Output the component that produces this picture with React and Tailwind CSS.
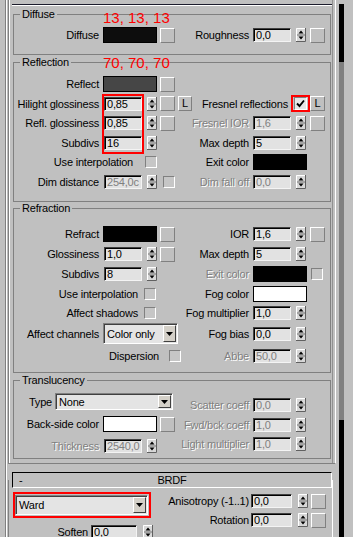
import React from "react";

const DIS = "text-[#808080] [text-shadow:1px_1px_0_#ffffff]";

function Lbl({ w = "w-[85px]", dis, children }) {
  return (
    <span className={`${w} shrink-0 text-right whitespace-nowrap ${dis ? DIS : ""}`}>
      {children}
    </span>
  );
}

function Field({ v, w = "w-[38px]", dis, cls = "" }) {
  return (
    <div
      className={`${w} ${cls} h-[14px] shrink-0 overflow-hidden whitespace-nowrap bg-[#e2e2e2] border border-t-[#404040] border-l-[#404040] border-r-[#f4f4f4] border-b-[#f4f4f4] shadow-[inset_1px_1px_0_#000000] pl-[2px] leading-[12px] ${
        dis ? "text-[#808080]" : "text-black"
      }`}
    >
      {v}
    </div>
  );
}

function Spin({ cls = "" }) {
  return (
    <svg width="10" height="14" viewBox="0 0 10 14" className={`shrink-0 ${cls}`}>
      <rect width="10" height="14" fill="#d8d8d8" />
      <path d="M0.5 13.5V0.5H9.5" stroke="#ffffff" fill="none" />
      <path d="M0 13.5H9.5V0" stroke="#606060" fill="none" />
      <path d="M1 7H9" stroke="#707070" />
      <path d="M5 2.5L7.5 5.5H2.5Z" fill="#000000" />
      <path d="M2.5 8.5H7.5L5 11.5Z" fill="#000000" />
    </svg>
  );
}

function Btn({ w = "w-[15px]", cls = "", children }) {
  return (
    <div
      className={`${w} ${cls} h-[15px] shrink-0 border border-t-white border-l-white border-r-[#808080] border-b-[#808080] flex items-center justify-center leading-none`}
    >
      {children}
    </div>
  );
}

function Chk({ cls = "", checked }) {
  if (checked)
    return (
      <div
        className={`${cls} w-[13px] h-[13px] shrink-0 border border-t-[#808080] border-l-[#808080] border-r-white border-b-white bg-[#e6e6e6] flex items-center justify-center`}
      >
        <svg width="9" height="9" viewBox="0 0 9 9">
          <path d="M1 4.5L3.5 7L8 1.5" stroke="#000000" strokeWidth="1.9" fill="none" />
        </svg>
      </div>
    );
  return (
    <div
      className={`${cls} w-[12px] h-[12px] shrink-0 border border-t-[#808080] border-l-[#808080] border-r-white border-b-white bg-[#c6c6c6]`}
    />
  );
}

function Sw({ bg, cls = "" }) {
  return <div className={`${bg} ${cls} w-[54px] h-[16px] shrink-0 border border-black`} />;
}

function Select({ v, w, h, cls = "" }) {
  return (
    <div
      className={`${w} ${h} ${cls} shrink-0 flex items-center bg-[#e4e4e4] border border-t-[#808080] border-l-[#808080] border-r-white border-b-white shadow-[inset_1px_1px_0_#404040]`}
    >
      <span className="flex-1 pl-[3px] whitespace-nowrap">{v}</span>
      <div className="w-[13px] self-stretch mt-[1px] mb-[1px] mr-[1px] bg-[#d4d0c8] border border-t-white border-l-white border-r-[#404040] border-b-[#404040] flex items-center justify-center">
        <svg width="7" height="4" viewBox="0 0 7 4">
          <path d="M0 0H7L3.5 4Z" fill="#000000" />
        </svg>
      </div>
    </div>
  );
}

function Row({ h, left, right }) {
  return (
    <div className={`${h} flex items-center`}>
      <div className="w-[160px] shrink-0 flex items-center">{left}</div>
      <div className="flex items-center">{right}</div>
    </div>
  );
}

function Group({ title, cls = "", children }) {
  return (
    <fieldset className={`w-[318px] border border-[#808080] ${cls}`}>
      <legend className="ml-[6px] px-[2px] leading-[12px]">{title}</legend>
      {children}
    </fieldset>
  );
}

export default function App() {
  return (
    <div className="relative w-[353px] h-[537px] overflow-hidden bg-[#c0c0c0] flex font-['Liberation_Sans',Arial,sans-serif] text-[11px] leading-[12px] tracking-[-0.2px] text-black">
      {/* left frame lines */}
      <div className="w-[8px] shrink-0 pl-[5px]">
        <div className="w-[2px] h-full border-l border-r border-l-[#808080] border-r-white" />
      </div>

      {/* main column */}
      <div className="w-[328px] shrink-0 flex flex-col">
        {/* rollout 1 */}
        <div className="border-l border-r border-b border-l-[#808080] border-r-white border-b-[#808080]">
          <div className="w-[324px] border-l border-r border-l-white border-r-[#909090] pl-[3px] pb-[4px]">
            <div className="h-[4px]" />
            <div className="-ml-[1px] w-[320px] h-[2px] border-t border-b border-t-[#1c1c2c] border-b-white" />

            {/* Diffuse */}
            <Group title="Diffuse" cls="mt-[2px] pt-[5px] pb-[9px]">
              <Row
                h="h-[20px]"
                left={
                  <>
                    <Lbl>Diffuse</Lbl>
                    <Sw bg="bg-[#0d0d0d]" cls="ml-[4px]" />
                    <Btn cls="ml-[3px]" />
                  </>
                }
                right={
                  <>
                    <Lbl w="w-[75px]">Roughness</Lbl>
                    <Field v="0,0" cls="ml-[4px]" />
                    <Spin cls="ml-[5px]" />
                    <Btn cls="ml-[4px]" />
                  </>
                }
              />
            </Group>

            {/* Reflection */}
            <Group title="Reflection" cls="mt-[1px] pt-[6px] pb-[10px]">
              <Row
                h="h-[20px]"
                left={
                  <>
                    <Lbl>Reflect</Lbl>
                    <Sw bg="bg-[#464646]" cls="ml-[4px]" />
                    <Btn cls="ml-[3px]" />
                  </>
                }
                right={null}
              />
              <Row
                h="h-[19px]"
                left={
                  <>
                    <Lbl>Hilight glossiness</Lbl>
                    <Field v="0,85" cls="ml-[5px]" />
                    <Spin cls="ml-[5px]" />
                    <Btn cls="ml-[3px]" />
                    <Btn w="w-[14px]" cls="ml-[3px]">L</Btn>
                  </>
                }
                right={
                  <>
                    <Lbl w="w-[114px]">Fresnel reflections</Lbl>
                    <Chk checked cls="ml-[6px]" />
                    <Btn cls="ml-[3px]">L</Btn>
                  </>
                }
              />
              <Row
                h="h-[20px]"
                left={
                  <>
                    <Lbl>Refl. glossiness</Lbl>
                    <Field v="0,85" cls="ml-[5px]" />
                    <Spin cls="ml-[5px]" />
                    <Btn cls="ml-[3px]" />
                  </>
                }
                right={
                  <>
                    <Lbl w="w-[75px]" dis>Fresnel IOR</Lbl>
                    <Field v="1,6" dis cls="ml-[4px]" />
                    <Spin cls="ml-[5px]" />
                    <Btn cls="ml-[4px]" />
                  </>
                }
              />
              <Row
                h="h-[19px]"
                left={
                  <>
                    <Lbl>Subdivs</Lbl>
                    <Field v="16" cls="ml-[5px]" />
                    <Spin cls="ml-[5px]" />
                  </>
                }
                right={
                  <>
                    <Lbl w="w-[75px]">Max depth</Lbl>
                    <Field v="5" cls="ml-[4px]" />
                    <Spin cls="ml-[5px]" />
                  </>
                }
              />
              <Row
                h="h-[20px]"
                left={
                  <>
                    <Lbl w="w-[119px]">Use interpolation</Lbl>
                    <Chk cls="ml-[12px]" />
                  </>
                }
                right={
                  <>
                    <Lbl w="w-[75px]">Exit color</Lbl>
                    <Sw bg="bg-[#000000]" cls="ml-[4px]" />
                  </>
                }
              />
              <Row
                h="h-[19px]"
                left={
                  <>
                    <Lbl>Dim distance</Lbl>
                    <Field v="254,0c" dis cls="ml-[5px]" />
                    <Spin cls="ml-[5px]" />
                    <Chk cls="ml-[6px]" />
                  </>
                }
                right={
                  <>
                    <Lbl w="w-[75px]" dis>Dim fall off</Lbl>
                    <Field v="0,0" dis cls="ml-[4px]" />
                    <Spin cls="ml-[5px]" />
                  </>
                }
              />
            </Group>

            {/* Refraction */}
            <Group title="Refraction" cls="pt-[10px] pb-[5px]">
              <Row
                h="h-[20px]"
                left={
                  <>
                    <Lbl>Refract</Lbl>
                    <Sw bg="bg-[#000000]" cls="ml-[4px]" />
                    <Btn cls="ml-[3px]" />
                  </>
                }
                right={
                  <>
                    <Lbl w="w-[75px]">IOR</Lbl>
                    <Field v="1,6" cls="ml-[4px]" />
                    <Spin cls="ml-[5px]" />
                    <Btn cls="ml-[4px]" />
                  </>
                }
              />
              <Row
                h="h-[20px]"
                left={
                  <>
                    <Lbl>Glossiness</Lbl>
                    <Field v="1,0" cls="ml-[5px]" />
                    <Spin cls="ml-[5px]" />
                    <Btn cls="ml-[3px]" />
                  </>
                }
                right={
                  <>
                    <Lbl w="w-[75px]">Max depth</Lbl>
                    <Field v="5" cls="ml-[4px]" />
                    <Spin cls="ml-[5px]" />
                  </>
                }
              />
              <Row
                h="h-[20px]"
                left={
                  <>
                    <Lbl>Subdivs</Lbl>
                    <Field v="8" cls="ml-[5px]" />
                    <Spin cls="ml-[5px]" />
                  </>
                }
                right={
                  <>
                    <Lbl w="w-[75px]" dis>Exit color</Lbl>
                    <Sw bg="bg-[#000000]" cls="ml-[4px]" />
                    <Chk cls="ml-[4px]" />
                  </>
                }
              />
              <Row
                h="h-[19px]"
                left={
                  <>
                    <Lbl w="w-[124px]">Use interpolation</Lbl>
                    <Chk cls="ml-[6px]" />
                  </>
                }
                right={
                  <>
                    <Lbl w="w-[75px]">Fog color</Lbl>
                    <Sw bg="bg-[#ffffff]" cls="ml-[4px]" />
                  </>
                }
              />
              <Row
                h="h-[19px]"
                left={
                  <>
                    <Lbl w="w-[124px]">Affect shadows</Lbl>
                    <Chk cls="ml-[6px]" />
                  </>
                }
                right={
                  <>
                    <Lbl w="w-[75px]">Fog multiplier</Lbl>
                    <Field v="1,0" cls="ml-[4px]" />
                    <Spin cls="ml-[5px]" />
                  </>
                }
              />
              <Row
                h="h-[23px]"
                left={
                  <>
                    <Lbl>Affect channels</Lbl>
                    <Select v="Color only" w="w-[75px]" h="h-[21px]" cls="ml-[4px]" />
                  </>
                }
                right={
                  <>
                    <Lbl w="w-[75px]">Fog bias</Lbl>
                    <Field v="0,0" cls="ml-[4px]" />
                    <Spin cls="ml-[5px]" />
                  </>
                }
              />
              <Row
                h="h-[22px]"
                left={
                  <>
                    <Lbl w="w-[145px]">Dispersion</Lbl>
                    <Chk cls="ml-[10px]" />
                  </>
                }
                right={
                  <>
                    <Lbl w="w-[75px]" dis>Abbe</Lbl>
                    <Field v="50,0" dis cls="ml-[4px]" />
                    <Spin cls="ml-[5px]" />
                  </>
                }
              />
            </Group>

            {/* Translucency */}
            <Group title="Translucency" cls="mt-[1px] pb-[2px]">
              <div className="flex">
                <div className="w-[160px] shrink-0 flex flex-col pt-[5px]">
                  <div className="h-[21px] flex items-center">
                    <Lbl w="w-[38px]">Type</Lbl>
                    <Select v="None" w="w-[118px]" h="h-[17px]" cls="ml-[3px]" />
                  </div>
                  <div className="h-[24px] flex items-center">
                    <Lbl>Back-side color</Lbl>
                    <Sw bg="bg-[#ffffff]" cls="ml-[4px]" />
                    <Btn cls="ml-[3px]" />
                  </div>
                  <div className="h-[20px] flex items-center">
                    <Lbl dis>Thickness</Lbl>
                    <Field v="2540,0" dis cls="ml-[5px]" />
                    <Spin cls="ml-[5px]" />
                  </div>
                </div>
                <div className="flex flex-col pt-[8px]">
                  <div className="h-[21px] flex items-center">
                    <Lbl w="w-[75px]" dis>Scatter coeff</Lbl>
                    <Field v="0,0" dis cls="ml-[4px]" />
                    <Spin cls="ml-[5px]" />
                  </div>
                  <div className="h-[20px] flex items-center">
                    <Lbl w="w-[75px]" dis>Fwd/bck coeff</Lbl>
                    <Field v="1,0" dis cls="ml-[4px]" />
                    <Spin cls="ml-[5px]" />
                  </div>
                  <div className="h-[18px] flex items-center">
                    <Lbl w="w-[75px]" dis>Light multiplier</Lbl>
                    <Field v="1,0" dis cls="ml-[4px]" />
                    <Spin cls="ml-[5px]" />
                  </div>
                </div>
              </div>
            </Group>
          </div>
        </div>

        {/* BRDF rollout */}
        <div className="mt-[16px] w-[325px] flex-1 border-l border-r border-l-[#808080] border-r-white">
          <div className="-mt-[8px] ml-[3px] w-[320px] h-[16px] border border-t-black border-l-black border-r-white border-b-white grid grid-cols-[1fr_auto_1fr] items-center">
            <span className="pl-[6px]">-</span>
            <span>BRDF</span>
            <span />
          </div>
          <div className="flex">
            <div className="w-[143px] shrink-0 flex flex-col pl-[6px] pt-[7px]">
              <Select v="Ward" w="w-[133px]" h="h-[20px]" />
              <div className="h-[14px] mt-[10px] flex items-center">
                <Lbl w="w-[73px]">Soften</Lbl>
                <Field v="0,0" w="w-[46px]" cls="ml-[3px]" />
                <Spin cls="ml-[6px]" />
              </div>
            </div>
            <div className="flex flex-col pt-[6px]">
              <div className="h-[14px] flex items-center">
                <Lbl w="w-[97px]">Anisotropy (-1..1)</Lbl>
                <Field v="0,0" w="w-[41px]" cls="ml-[2px]" />
                <Spin cls="ml-[6px]" />
                <Btn cls="ml-[3px]" />
              </div>
              <div className="h-[14px] mt-[5px] flex items-center">
                <Lbl w="w-[97px]">Rotation</Lbl>
                <Field v="0,0" w="w-[41px]" cls="ml-[2px]" />
                <Spin cls="ml-[6px]" />
                <Btn cls="ml-[3px]" />
              </div>
            </div>
          </div>
        </div>
      </div>

      {/* scrollbar strip */}
      <div className="w-[17px] shrink-0 pl-[3px]">
        <div className="w-[5px] h-full flex flex-col">
          <div className="h-[4px]" />
          <div className="h-[58px] bg-black" />
          <div className="flex-1 bg-[#808080]" />
          <div className="h-[117px] bg-black" />
        </div>
      </div>

      {/* red annotations */}
      <span className="absolute left-[103px] top-[10px] text-[15px] leading-[15px] tracking-normal text-[#ff0000]">
        13, 13, 13
      </span>
      <span className="absolute left-[103px] top-[55px] text-[15px] leading-[15px] tracking-normal text-[#ff0000]">
        70, 70, 70
      </span>
      <div className="absolute left-[102px] top-[94px] w-[42px] h-[60px] border-2 border-[#ff0000]" />
      <div className="absolute left-[291px] top-[95px] w-[19px] h-[17px] border-2 border-[#ff0000]" />
      <div className="absolute left-[13px] top-[492px] w-[138px] h-[26px] border-2 border-[#ff0000]" />
    </div>
  );
}
